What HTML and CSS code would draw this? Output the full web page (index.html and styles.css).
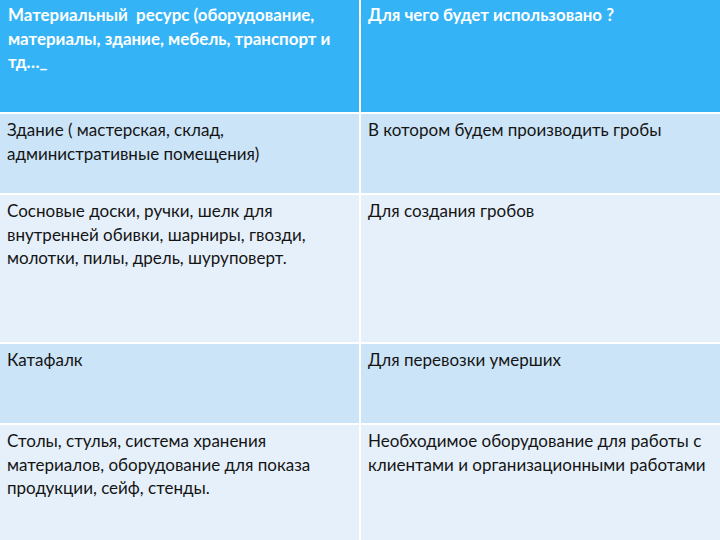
FILE: index.html
```html
<!DOCTYPE html>
<html lang="ru">
<head>
<meta charset="utf-8">
<link rel="stylesheet" href="styles.css">
</head>
<body>
<div class="table">
  <div class="cell head r0">Материальный&nbsp; ресурс (оборудование, материалы, здание, мебель, транспорт и тд…_</div>
  <div class="cell head r0">Для чего будет использовано ?</div>
  <div class="cell odd r1">Здание ( мастерская, склад, административные помещения)</div>
  <div class="cell odd r1">В котором будем производить гробы</div>
  <div class="cell even r2">Сосновые доски, ручки, шелк для внутренней обивки, шарниры, гвозди, молотки, пилы, дрель, шуруповерт.</div>
  <div class="cell even r2">Для создания гробов</div>
  <div class="cell odd r3">Катафалк</div>
  <div class="cell odd r3">Для перевозки умерших</div>
  <div class="cell even r4">Столы, стулья, система хранения материалов, оборудование для показа продукции, сейф, стенды.</div>
  <div class="cell even r4">Необходимое оборудование для работы с клиентами и организационными работами</div>
</div>
</body>
</html>
```
FILE: styles.css
```css
html, body {
  margin: 0;
  padding: 0;
  background: #ffffff;
}
body {
  width: 720px;
  height: 540px;
  overflow: hidden;
  font-family: "Lato", "Open Sans", "DejaVu Sans", sans-serif;
}
.table {
  display: grid;
  grid-template-columns: 359px 359px;
  grid-template-rows: 112px 79px 147px 79px 115px;
  column-gap: 2px;
  row-gap: 2px;
  background: #ffffff;
}
.cell {
  padding: 4px 8px 0 8px;
  font-size: 17px;
  line-height: 23.5px;
  color: #141414;
}
.cell + .cell {
  padding-left: 7px;
}
.head {
  background: #34b4f6;
  color: #ffffff;
  font-weight: 700;
  font-size: 16.9px;
  padding-top: 3px;
}
.odd {
  background: #cce4f8;
}
.even {
  background: #e6f0fb;
}
```
